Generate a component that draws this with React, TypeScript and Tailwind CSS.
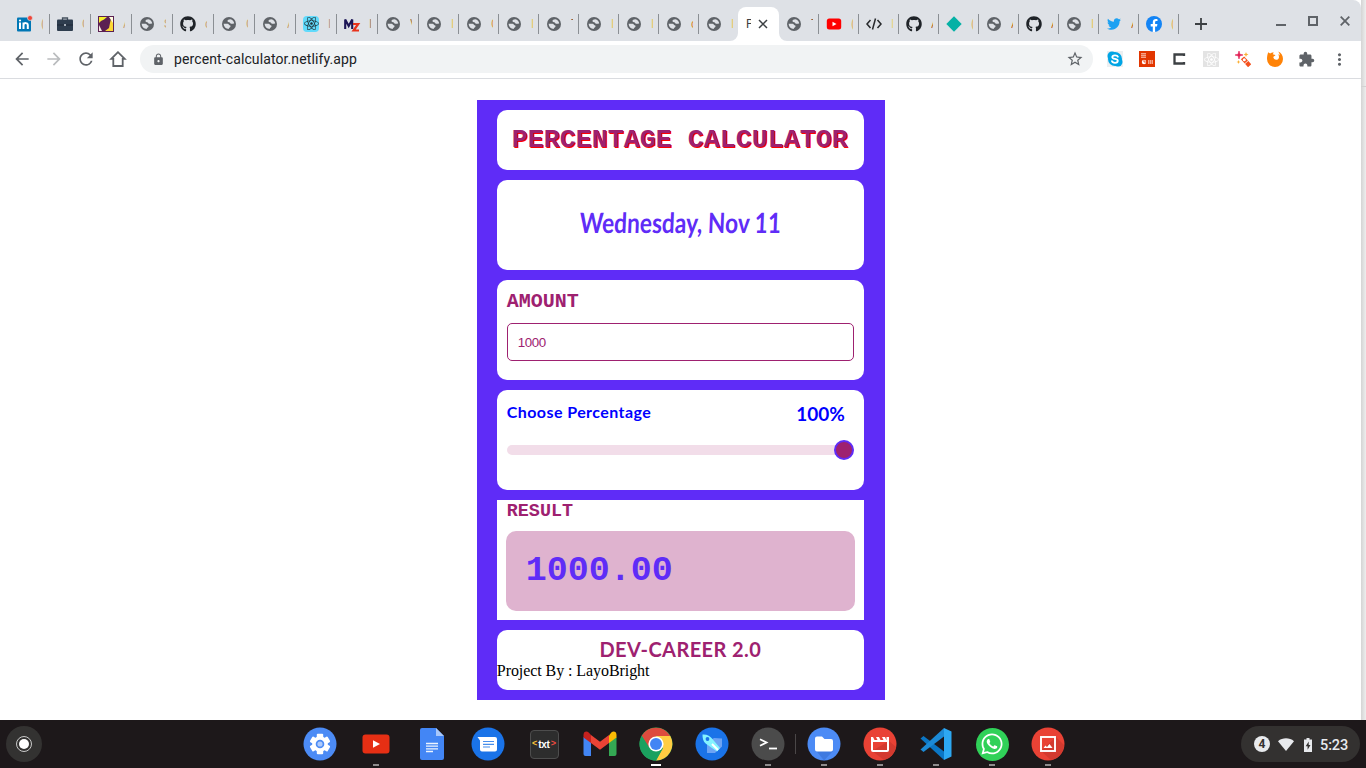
import type { ReactNode } from "react";
import { FaGithub, FaReact, FaTwitter, FaWhatsapp } from "react-icons/fa";
import {
  MdArrowBack,
  MdArrowForward,
  MdRefresh,
  MdLock,
  MdStarOutline,
  MdExtension,
  MdMoreVert,
} from "react-icons/md";

/* ---------- favicons ---------- */

const Globe = () => (
  <svg viewBox="0 0 14 14" className="h-3.5 w-3.5">
    <circle cx="7" cy="7" r="7" fill="#5f6368" />
    <path
      d="M8.300 2.300C6.700 2.400 5.500 3 5.500 4.100c.1 1.200 1.300 1.200 2.300 1.300.5.900 1 1.500 2.100 1.400.8 0 1.400-.5 2.300-.4-.2-1.900-1.700-3.600-3.900-4.100zM1.600 6.800H4.700c1.500 0 2.200.5 2.300 1.300.9.100 1.700.5 1.500 1.300-.2.900-1.200.9-1.500 1.700l-.3 1C3.800 11.900 1.700 9.700 1.600 6.800z"
      fill="#dee1e6"
    />
  </svg>
);
const LinkedIn = () => (
  <svg viewBox="0 0 16 16" className="h-4 w-4 overflow-visible">
    <rect x="1" y="1.500" width="14" height="14" rx="1" fill="#0077b5" />
    <path d="M4 6.500V13M7.500 13V6.500M7.500 9c.3-2.500 4.300-2.600 4.300.3V13" fill="none" stroke="#fff" strokeWidth="2" />
    <circle cx="4" cy="4.500" r="1.100" fill="#fff" />
    <circle cx="14" cy="2" r="2.500" fill="#f04438" stroke="#dee1e6" strokeWidth=".7" />
  </svg>
);
const Briefcase = () => (
  <svg viewBox="0 0 16 16" className="h-4 w-4">
    <path d="M5.500 4V2h5v2" fill="none" stroke="#46525f" strokeWidth="1.300" />
    <rect y="3.500" width="16" height="11.500" rx="1" fill="#2e3d4e" />
    <path d="M0 9h16" stroke="#1d2937" />
    <rect x="7.200" y="8" width="1.600" height="2" fill="#c4ccd4" />
  </svg>
);
const Jungle = () => (
  <svg viewBox="0 0 16 16" className="h-4 w-4">
    <rect width="16" height="16" fill="#5b2052" />
    <path d="M1 1h8L6 3.500 3 5 1 7z" fill="#f7f02d" />
    <path d="M15 1v14H7l4-3 1-5 1-4z" fill="#fdd835" />
    <path d="M11 1h4v6l-2-3z" fill="#fffde0" />
    <path d="M1 9l3 6H1z" fill="#f8eee8" />
  </svg>
);
const ReactTile = () => (
  <span className="flex h-4 w-4 items-center justify-center rounded-sm bg-[#61dafb] text-[#20333b]">
    <FaReact size={15} />
  </span>
);
const Mz = () => (
  <svg viewBox="0 0 16 16" className="h-4 w-4 overflow-visible" fill="none">
    <path d="M1.200 13V3.500L4.700 10l3.500-6.500V13" stroke="#1c1556" strokeWidth="2.100" />
    <path d="M9 8h5.200L9.600 14.500H15" stroke="#e8331c" strokeWidth="2.200" />
  </svg>
);
const YouTubeFav = () => (
  <svg viewBox="0 0 16 16" className="h-4 w-4">
    <rect x=".8" y="2.500" width="14.400" height="11" rx="2.500" fill="#f00" />
    <path d="M6.500 5.800v4.400l4-2.200z" fill="#fff" />
  </svg>
);
const Code = () => (
  <svg viewBox="0 0 16 16" className="h-4 w-4" fill="none" stroke="#27292c" strokeWidth="1.500">
    <path d="M4.500 4L1 8l3.500 4M11.500 4L15 8l-3.500 4M9.500 2.500l-3 11" />
  </svg>
);
const Diamond = () => (
  <svg viewBox="0 0 16 16" className="h-4 w-4">
    <path d="M8 .3L15.700 8 8 15.700.3 8z" fill="#05b1a5" />
  </svg>
);
const Facebook = () => (
  <svg viewBox="0 0 16 16" className="h-4 w-4">
    <circle cx="8" cy="8" r="8" fill="#1384f5" />
    <path d="M6.800 16v-5.600H4.700V8h2.100V6.300c0-2.200 1.300-3.300 3.100-3.300.6 0 1.200.1 1.600.2v1.900h-1.100c-1 0-1.300.6-1.300 1.300V8h2.300l-.4 2.400H9.100V16z" fill="#fff" />
  </svg>
);
const Git = () => <FaGithub size={16} color="#1f2328" />;
const Bird = () => <FaTwitter size={14} color="#1da1f2" />;

type TabInfo = { icon: () => ReactNode; label: string; tone: string };
const G = (label: string, tone = "text-[#e7c96c]"): TabInfo => ({ icon: Globe, label, tone });

const tan = "text-[#c9a679]";
const tabsWide: TabInfo[] = [
  { icon: LinkedIn, label: "(", tone: tan },
  { icon: Briefcase, label: "C", tone: tan },
  { icon: Jungle, label: "A", tone: tan },
  G("S", tan),
  { icon: Git, label: "c", tone: tan },
  G("C", tan),
  G("A", tan),
  { icon: ReactTile, label: "I", tone: "text-[#b39a96]" },
  { icon: Mz, label: "I", tone: "text-[#9c8a78]" },
  G("V", "text-[#a8844c]"),
];
const tabsMid: TabInfo[] = [G("I"), G("C", "text-[#dc9c50]"), G("I"), G("T", "text-[#8d6246]"), G("I"), G("I"), G("c", "text-[#dc8b32]"), G("I")];
const tabsAfter: TabInfo[] = [
  G("T", "text-[#8d6246]"),
  { icon: YouTubeFav, label: "(", tone: "text-[#dfb56a]" },
  { icon: Code, label: "I", tone: "text-[#e7d488]" },
  { icon: Git, label: "A", tone: "text-[#b87534]" },
  { icon: Diamond, label: "(", tone: "text-[#dfb56a]" },
  G("A", "text-[#c47529]"),
  { icon: Git, label: "A", tone: "text-[#c47529]" },
  G("I"),
  { icon: Bird, label: "A", tone: "text-[#c47529]" },
  { icon: Facebook, label: "(", tone: "text-[#e8b75c]" },
];

const Tab = ({ tab, wide, bare }: { tab: TabInfo; wide?: boolean; bare?: boolean }) => (
  <div className={`flex h-5 shrink-0 items-center border-r pl-[7px] ${bare ? "border-transparent" : "border-[#8b8f94]"} ${wide ? "w-[41px]" : "w-10"}`}>
    <span className="flex w-4 shrink-0 justify-center">
      <tab.icon />
    </span>
    <span className={`ml-[9px] w-[2px] overflow-hidden font-[Roboto] text-[12px] leading-4 ${tab.tone}`}>{tab.label}</span>
  </div>
);

const TabStrip = () => (
  <div className="flex h-[41px] rounded-tr-lg bg-[#dee1e6] pl-[9px]">
    <div className="flex h-[47px] items-center">
      {tabsWide.map((t, i) => (
        <Tab key={i} tab={t} wide />
      ))}
      {tabsMid.map((t, i) => (
        <Tab key={i} tab={t} bare={i === tabsMid.length - 1} />
      ))}
    </div>
    <div className="relative -ml-px mt-[7px] flex h-[34px] w-[41px] items-center rounded-t-lg bg-white pl-2">
      <svg className="absolute bottom-0 -left-2 h-2 w-2" viewBox="0 0 8 8">
        <path d="M8 0v8H0a8 8 0 008-8z" fill="#fff" />
      </svg>
      <svg className="absolute -right-2 bottom-0 h-2 w-2" viewBox="0 0 8 8">
        <path d="M0 0v8h8a8 8 0 01-8-8z" fill="#fff" />
      </svg>
      <span className="w-[5px] overflow-hidden font-[Roboto] text-[12px] text-[#3c4043]">P</span>
      <svg viewBox="0 0 8 8" className="ml-2 h-2 w-2 overflow-visible" stroke="#3c4043" strokeWidth="1.500">
        <path d="M0 0l8 8M8 0L0 8" />
      </svg>
    </div>
    <div className="flex h-[47px] items-center">
      {tabsAfter.map((t, i) => (
        <Tab key={i} tab={t} />
      ))}
      <svg viewBox="0 0 12 12" className="ml-4 h-3 w-3" stroke="#3c4043" strokeWidth="1.800">
        <path d="M6 0v12M0 6h12" />
      </svg>
    </div>
    <div className="ml-auto flex h-[42px] items-center gap-[22px] pr-[11px]">
      <svg viewBox="0 0 10 10" className="h-2.5 w-2.5" stroke="#5f6368" strokeWidth="2">
        <path d="M0 9h10" />
      </svg>
      <svg viewBox="0 0 10 10" className="h-2.5 w-2.5" fill="none" stroke="#5f6368" strokeWidth="2">
        <rect x="1" y="1" width="8" height="8" />
      </svg>
      <svg viewBox="0 0 10 10" className="h-2.5 w-2.5" stroke="#5f6368" strokeWidth="1.800">
        <path d="M.7.7l8.600 8.600M9.300.7L.7 9.300" />
      </svg>
    </div>
  </div>
);

/* ---------- toolbar ---------- */

const Toolbar = () => (
  <div className="flex h-[38px] items-center border-b border-[#dadce0] bg-white pb-px pl-3 text-[#5f6368]">
    <div className="flex items-center gap-3">
      <MdArrowBack size={20} />
      <MdArrowForward size={20} color="#babcbe" />
      <MdRefresh size={20} />
      <svg viewBox="0 0 20 20" className="h-5 w-5" fill="none" stroke="#5f6368" strokeWidth="1.800">
        <path d="M10 3.200L3.300 9.900h2V17h9.400V9.900h2z" />
      </svg>
    </div>
    <div className="ml-3 flex h-7 w-[953px] items-center rounded-full bg-[#f1f3f4] pl-3">
      <MdLock size={13} />
      <span className="ml-[9px] font-[Roboto] text-[14px] leading-5 tracking-[.11px] text-[#202124]">percent-calculator.netlify.app</span>
      <MdStarOutline size={18} className="mr-[9px] ml-auto" />
    </div>
    <div className="ml-3.5 flex items-center gap-4">
      <svg viewBox="0 0 16 16" className="h-4 w-4">
        <rect width="16" height="16" fill="#eceff1" />
        <circle cx="5" cy="5" r="4.500" fill="#00a5e5" />
        <circle cx="11" cy="11" r="4.500" fill="#00a5e5" />
        <circle cx="8" cy="8" r="7" fill="#00a5e5" />
        <path d="M10.900 5.700C10.300 4 5.300 3.700 5.300 6.200c0 2.300 5.500 1.200 5.500 3.600 0 2.700-5.300 2.500-5.900.3" fill="none" stroke="#fff" strokeWidth="1.800" strokeLinecap="round" />
      </svg>
      <svg viewBox="0 0 16 16" className="h-4 w-4">
        <rect width="16" height="16" fill="#e23600" />
        <path d="M2 2h5v5H2zM9 9h5v4H9z" fill="#f5a48a" />
        <path d="M2 3.500h5M2 5.500h5M10.500 9v4M12.500 9v4" stroke="#e23600" strokeWidth=".5" />
        <circle cx="5" cy="11" r="2.200" fill="#fff" />
        <path d="M5 11V8.500M5 11h2.500" stroke="#e23600" strokeWidth=".8" />
      </svg>
      <svg viewBox="0 0 16 16" className="h-4 w-4">
        <path d="M13 5V3.500H3.500v9H13V11" fill="none" stroke="#3c4043" strokeWidth="2.300" />
      </svg>
      <span className="flex h-4 w-4 items-center justify-center bg-[#e3e3e3] text-white">
        <FaReact size={15} />
      </span>
      <svg viewBox="0 0 16 16" className="h-4 w-4">
        <path d="M4 0l.8 3.200L8 4l-3.200.8L4 8l-.8-3.200L0 4l3.200-.8z" fill="#e0184f" stroke="#e0184f" strokeWidth=".6" />
        <path d="M11 1l.7 1.800 1.800.7-1.800.7L11 6l-.7-1.800-1.800-.7 1.800-.7zM3.500 9l.6 1.400 1.400.6-1.400.6-.6 1.400-.6-1.400-1.400-.6 1.400-.6z" fill="#fbb034" />
        <path d="M9 8.500l4.200 4.600" stroke="#f4511e" strokeWidth="4.400" strokeLinecap="square" />
        <circle cx="9.300" cy="8.800" r="1.500" fill="#fff" />
        <path d="M9.500 13l3.500-3.200" stroke="#fff" strokeWidth=".9" />
      </svg>
      <svg viewBox="0 0 16 16" className="h-4 w-4">
        <path
          d="M1.300 1.200c.6.700 1.200 1.100 2 1.300 1-.9 2-1.100 3.500-1L5.700 3.300l2.700.8c-.3 1-1.600 1.300-2.100 2 .1 1.700 1.700 2.900 3.500 2.600 2.600-.5 2.700-3.500 1.300-5.400.9.300 1.300.7 1.700 1.200C12.700 2.900 12 1.600 11 .6c3 1 5 4 5 7.400a8 8 0 01-16 0c0-2.600.4-4.800 1.300-6.800z"
          fill="#ff8307"
        />
      </svg>
      <MdExtension size={17} className="-mx-px" />
      <MdMoreVert size={19} className="-mr-px" />
    </div>
  </div>
);

/* ---------- calculator ---------- */

const Calculator = () => (
  <main className="mt-[21px] ml-[476.8px] flex h-[600px] w-[408px] flex-col gap-2.5 bg-[#5f2cf7] py-2.5 pr-[21px] pl-5">
    <h1 className="flex h-[60px] items-center justify-center rounded-[10px] bg-white pr-px font-['Liberation_Mono'] text-[26.67px] font-bold whitespace-nowrap text-[#9e2170] [text-shadow:1px_1px_red]">
      PERCENTAGE CALCULATOR
    </h1>
    <div className="flex h-[90px] items-center justify-center rounded-[10px] bg-white">
      <p className="scale-x-[.81] -skew-x-3 pb-[7px] font-[Lato] text-[28px] font-bold whitespace-nowrap text-[#5f2cf7]">Wednesday, Nov 11</p>
    </div>
    <section className="h-[100px] rounded-[10px] bg-white px-2.5 pt-2.5">
      <h2 className="font-['Liberation_Mono'] text-[20px] leading-[23px] font-bold text-[#9e2170]">AMOUNT</h2>
      <input
        className="mt-2.5 block h-[38px] w-full rounded-[5px] border border-[#9e2170] px-2.5 font-['Liberation_Sans'] text-[13.33px] tracking-[-.4px] text-[#9e2170] outline-none"
        defaultValue="1000"
      />
    </section>
    <section className="h-[100px] rounded-[10px] bg-white px-2.5 pt-2.5">
      <div className="flex h-6 items-center justify-between pr-[9px] font-[Lato] font-bold text-[#0000ff]">
        <span className="text-[16px] tracking-[.42px]">Choose Percentage</span>
        <span className="pt-1 text-[19px]">100%</span>
      </div>
      <div className="mt-4 flex h-5 items-center">
        <div className="flex h-2.5 w-full items-center justify-end rounded-full bg-[#f2dde9]">
          <div className="h-5 w-5 rounded-full border-2 border-[#5f2cf7] bg-[#9e2170]" />
        </div>
      </div>
    </section>
    <section className="h-[120px] bg-white px-[9px] pt-px">
      <h2 className="pl-px font-['Liberation_Mono'] text-[18.4px] leading-[21px] font-bold text-[#9e2170]">RESULT</h2>
      <div className="mt-[9px] flex h-20 items-center rounded-[10px] bg-[#dfb3cf] pl-5 font-['Liberation_Mono'] text-[35px] font-bold text-[#5f2cf7]">
        1000.00
      </div>
    </section>
    <footer className="h-[60px] rounded-[10px] bg-white pt-2">
      <p className="text-center font-[Lato] text-[20px] leading-[22px] font-bold tracking-[.4px] text-[#9e2170]">DEV-CAREER 2.0</p>
      <p className="mt-0.5 font-['Liberation_Serif'] text-[16px] leading-[18px] tracking-[-.07px] text-black">Project By : LayoBright</p>
    </footer>
  </main>
);

/* ---------- shelf ---------- */

const Disc = ({ fill, children }: { fill: string; children: ReactNode }) => (
  <svg viewBox="0 0 34 34" className="h-[34px] w-[34px]">
    <circle cx="17" cy="17" r="16.500" fill={fill} />
    {children}
  </svg>
);

const teeth = [0, 60, 120, 180, 240, 300];

const apps: { icon: ReactNode; mark?: "run" | "active" }[] = [
  {
    icon: (
      <Disc fill="#4c8bf5">
        {teeth.map((a) => (
          <rect key={a} x="13.800" y="6.800" width="6.400" height="6" rx="1" fill="#fff" transform={`rotate(${a} 17 17)`} />
        ))}
        <circle cx="17" cy="17" r="7.800" fill="#fff" />
        <circle cx="17" cy="17" r="4.300" fill="#4c8bf5" />
        <circle cx="17" cy="17" r="2.600" fill="#fff" opacity=".55" />
      </Disc>
    ),
  },
  {
    icon: (
      <svg viewBox="0 0 34 34" className="h-[34px] w-[34px]">
        <rect x="3.500" y="7.500" width="27" height="19" rx="3" fill="#e62f14" />
        <path d="M14 13.200v7.600l7-3.800z" fill="#fff" />
      </svg>
    ),
    mark: "run",
  },
  {
    icon: (
      <svg viewBox="0 0 34 34" className="h-[34px] w-[34px]">
        <path d="M5 3a2 2 0 012-2h14l8 8v22a2 2 0 01-2 2H7a2 2 0 01-2-2z" fill="#4386f5" />
        <path d="M21 1l8 8h-8z" fill="#a8c7fa" />
        <path d="M11 16.500h12M11 19.200h12M11 21.800h12M11 24.500h7" stroke="#fff" strokeWidth="1.300" opacity=".9" />
      </svg>
    ),
  },
  {
    icon: (
      <Disc fill="#1a73e8">
        <path d="M6.500 10H24a2 2 0 012 2v10.500a2 2 0 01-2 2H11a2 2 0 01-2-2V13.500z" fill="#fff" />
        <path d="M12 14.500h11M12 17.300h11M12 20h7" stroke="#1a73e8" strokeWidth="1.200" opacity=".8" />
      </Disc>
    ),
  },
  {
    icon: (
      <div className="flex h-[29px] w-[29px] items-center justify-center rounded-sm border border-[#4d4d4d] bg-[#2d2d2d] font-['Liberation_Sans'] text-[9px] font-bold text-white">
        <span className="text-[#f9c43c]">&lt;</span>
        <span className="px-px text-[10px] tracking-[-.3px]">txt</span>
        <span className="text-[#f04b40]">&gt;</span>
      </div>
    ),
  },
  {
    icon: (
      <svg viewBox="0 0 34 34" className="h-[34px] w-[34px]">
        <path d="M.5 10v17a2 2 0 002 2H8V14z" fill="#4285f4" />
        <path d="M33.500 10v17a2 2 0 01-2 2H26V14z" fill="#34a853" />
        <path d="M26 8.500V16l7.500-5.500V8c0-3.500-3-4.200-5.200-2.500z" fill="#fbbc04" />
        <path d="M8 8l9 6.800L26 8v8l-9 6.700L8 16z" fill="#ea4335" />
        <path d="M.5 8v2.500L8 16V8L5.700 5.500C3.500 3.800.5 4.500.5 8z" fill="#c5221f" />
      </svg>
    ),
  },
  {
    icon: (
      <Disc fill="#34a853">
        <path d="M2.700 8.800A16.500 16.500 0 0131.300 9H17l-7 12z" fill="#dd4b3e" />
        <path d="M31.300 9A16.500 16.500 0 0117 33.500L24 21l-7-12z" fill="#ffcd42" />
        <path d="M2.700 8.800A16.500 16.500 0 0017 33.500L24 21l-7 3-7-4z" fill="#1ba15f" />
        <circle cx="17" cy="17" r="7.600" fill="#fff" />
        <circle cx="17" cy="17" r="6" fill="#4285f4" />
      </Disc>
    ),
    mark: "active",
  },
  {
    icon: (
      <Disc fill="#1a73e8">
        <path d="M19 11l8 .5v8l-3 3-9-9zM12 17v9h8l4-4-8-8z" fill="#8ab4f8" opacity=".75" />
        <path d="M7.500 7.500c5-.3 7.500 1.500 9.500 4l8 9.500-3 3.500L12 17.500c-3-2-4.500-4.500-4.500-10z" fill="#84f3ff" />
        <path d="M17 17l6 6" stroke="#fff" strokeWidth="2" />
        <circle cx="12.500" cy="12" r="1.900" fill="#1a73e8" />
      </Disc>
    ),
  },
  {
    icon: (
      <Disc fill="#4b4b4b">
        <path d="M9 12.300l6.500 3.200L9 18.700" fill="none" stroke="#fff" strokeWidth="1.800" />
        <path d="M18 21.500h8" stroke="#fff" strokeWidth="1.800" />
      </Disc>
    ),
    mark: "run",
  },
  {
    icon: (
      <Disc fill="#4c8bf5">
        <path d="M26 13v11l-9 9.500-8-10z" fill="#3f7ae0" />
        <path d="M8 11.500a2 2 0 012-2h5l2.500 2.500H24a2 2 0 012 2v8.500a2 2 0 01-2 2H10a2 2 0 01-2-2z" fill="#fff" />
      </Disc>
    ),
    mark: "run",
  },
  {
    icon: (
      <Disc fill="#e94235">
        <path d="M26 14l7 6a16 16 0 01-12 13l-12-9z" fill="#d33a2f" />
        <rect x="9" y="14" width="16" height="10" rx="1" fill="none" stroke="#fff" strokeWidth="2" />
        <path d="M8 10l2 0 2 4h3l-2-4h3l2 4h3l-2-4h3l1.500 3.500V10H26v5H8z" fill="#fff" />
      </Disc>
    ),
    mark: "run",
  },
  {
    icon: (
      <svg viewBox="0 0 34 34" className="h-[34px] w-[34px]">
        <path d="M1.500 11.500L4.500 9l20.500 15.500V33z" fill="#0b76c4" />
        <path d="M1.500 22.500L4.500 25 25 9.500V1z" fill="#1c8ad6" />
        <path d="M25 1l7.500 3.500v25L25 33z" fill="#2da8f2" />
      </svg>
    ),
    mark: "run",
  },
  {
    icon: (
      <div className="flex h-[33px] w-[33px] items-center justify-center rounded-full bg-[#30d158] text-white">
        <FaWhatsapp size={24} />
      </div>
    ),
    mark: "run",
  },
  {
    icon: (
      <Disc fill="#e94235">
        <path d="M25 10l8 8a16 16 0 01-13 15l-10-9z" fill="#d33a2f" />
        <rect x="10" y="10" width="14" height="14" fill="none" stroke="#fff" strokeWidth="1.900" />
        <path d="M12.500 21l2-2.500 1.500 1.500 2.500-3 3 4z" fill="#fff" />
      </Disc>
    ),
    mark: "run",
  },
];

const Shelf = () => (
  <nav className="flex h-12 items-center bg-[#1d181a]">
    <div className="ml-1.5 flex h-9 w-9 items-center justify-center rounded-full bg-[#333231]">
      <div className="flex h-4 w-4 items-center justify-center rounded-full border border-[#c9c9c9]">
        <div className="h-2.5 w-2.5 rounded-full bg-white" />
      </div>
    </div>
    <div className="ml-[250px] flex">
      {apps.map((app, i) => (
        <div key={i} className="relative flex h-12 w-14 items-center justify-center">
          {app.icon}
          {app.mark && (
            <span className={`absolute bottom-0.5 h-0.5 ${app.mark === "active" ? "w-2.5 bg-white" : "w-1.5 bg-[#8f8c8d]"}`} />
          )}
          {i === 8 && <span className="absolute top-3.5 right-0 h-5 w-px bg-[#4b4748]" />}
        </div>
      ))}
    </div>
    <div className="mr-1.5 ml-auto flex h-9 w-[119px] items-center rounded-full bg-[#333130] pl-[13px] text-[#e8eaed]">
      <span className="flex h-4 w-4 items-center justify-center rounded-full bg-[#e8eaed] font-[Roboto] text-[12px] font-bold text-[#333130]">4</span>
      <svg viewBox="0 0 16 13" className="ml-2 h-[13px] w-4">
        <path d="M0 3.200C4.500-.6 11.500-.6 16 3.200L8 13z" fill="#e8eaed" />
      </svg>
      <svg viewBox="0 0 8 14" className="mt-px ml-2.5 h-3.5 w-2">
        <path d="M2.500 0h3v1.500H8V14H0V1.500h2.500z" fill="#e8eaed" />
        <path d="M4.700 3.500L1.700 8.300h1.900v3.500l2.900-4.900H4.700z" fill="#333130" />
      </svg>
      <span className="ml-2 pt-[3px] font-[Roboto] text-[14.5px] font-medium tracking-[-.1px]">5:23</span>
    </div>
  </nav>
);

export default function App() {
  return (
    <div className="flex h-[768px] w-[1366px] flex-col overflow-hidden bg-white">
      <div className="flex h-[720px]">
        <div className="w-[1361px] shrink-0 bg-white">
          <TabStrip />
          <Toolbar />
          <Calculator />
        </div>
        <div className="w-[5px] bg-linear-to-r from-[#d4d4d4] to-[#eeeeee]">
          <div className="h-[87px] border-b border-[#d2d2d2]" />
        </div>
      </div>
      <Shelf />
    </div>
  );
}
